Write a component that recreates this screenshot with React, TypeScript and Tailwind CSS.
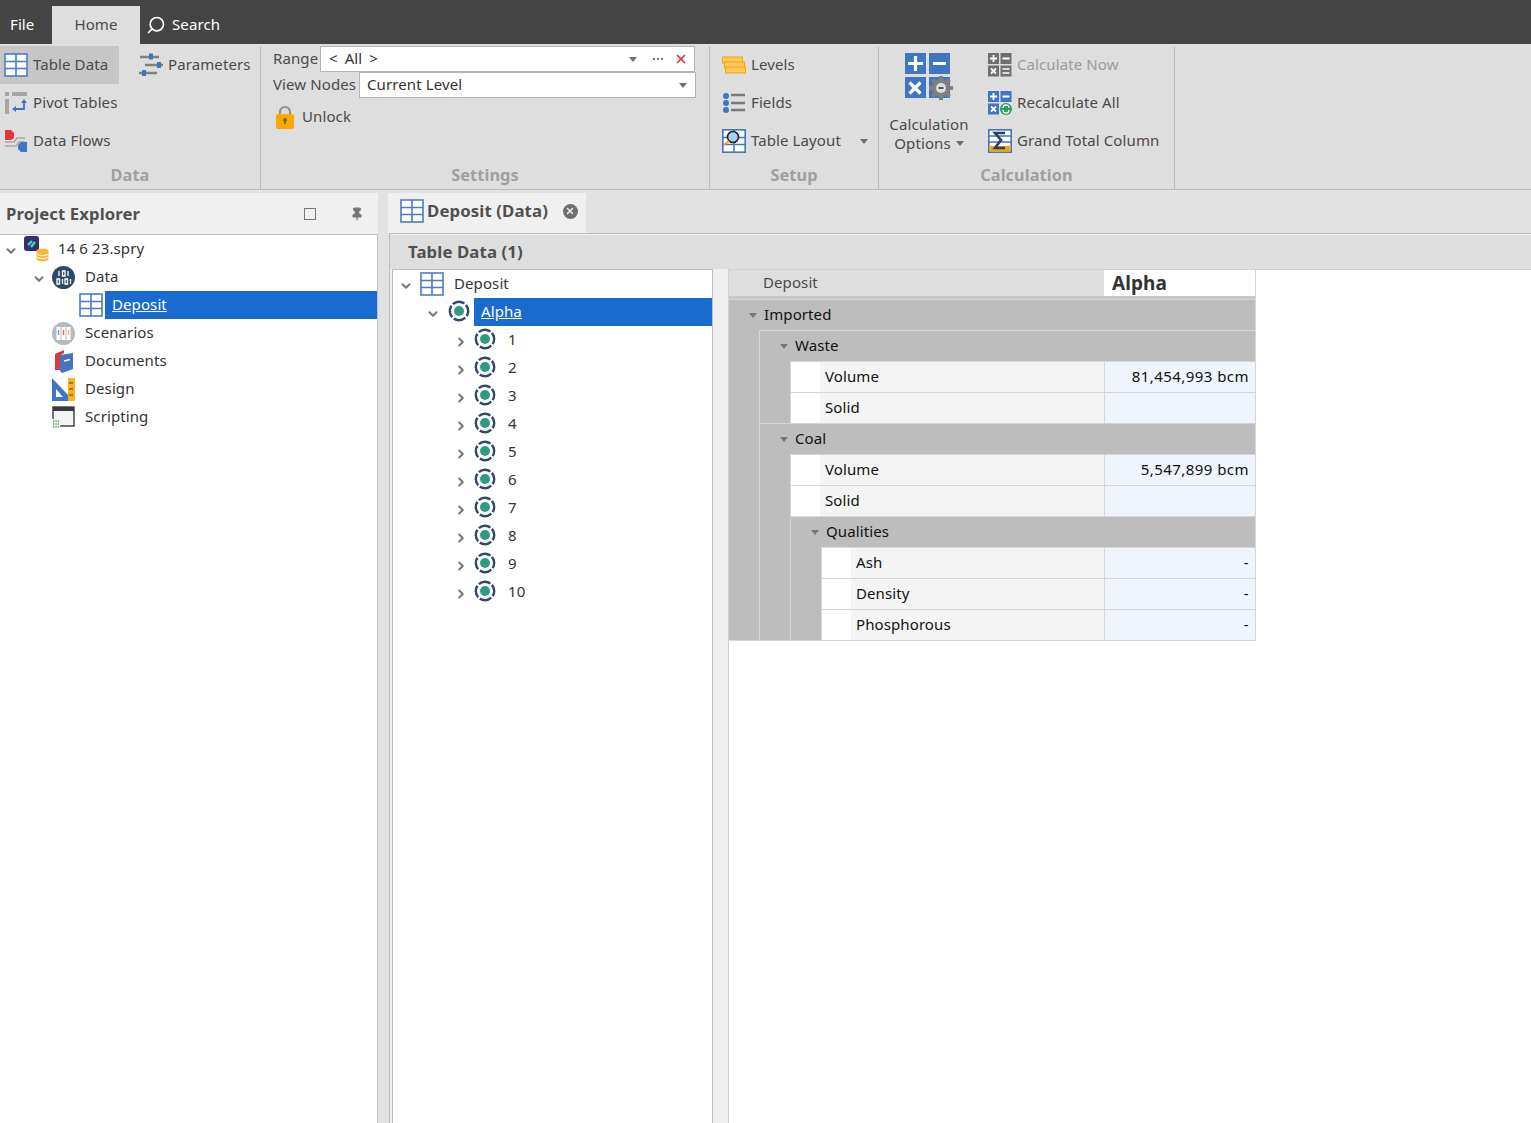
import type { ReactNode } from "react";
import { Search, ChevronDown, ChevronRight, Pin, X, MoreHorizontal } from "lucide-react";

const FONT = "[font-family:'Noto_Sans','Liberation_Sans',sans-serif]";

function GridIcon({ size = 24 }: { size?: number }) {
    return (
        <svg width={size} height={size} viewBox="0 0 24 24" className="shrink-0">
            <rect x="1" y="1" width="22" height="22" fill="#fff" stroke="#4a7cc4" strokeWidth="1.6" />
            <path d="M1 8.5H23M1 15.5H23M12 1V23" stroke="#4a7cc4" strokeWidth="1.6" fill="none" />
        </svg>
    );
}

function PivotIcon() {
    return (
        <svg width="24" height="24" viewBox="0 0 24 24" className="shrink-0">
            <rect x="1" y="1" width="4" height="4" fill="#a5a5a5" />
            <rect x="1" y="8" width="4" height="15" fill="#a5a5a5" />
            <rect x="8" y="1" width="15" height="4" fill="#a5a5a5" />
            <path d="M20 10V18H11" stroke="#3f75c2" strokeWidth="1.8" fill="none" />
            <path d="M17 12L20 8L23 12ZM12 15L8 18L12 21Z" fill="#3f75c2" />
        </svg>
    );
}

function FlowIcon() {
    return (
        <svg width="24" height="24" viewBox="0 0 24 24" className="shrink-0">
            <path d="M1 1H7L10 4V9L7 11H1Z" fill="#e5333f" />
            <path d="M1 13H10L13 9H21M1 17H12L15 13H21" stroke="#a8a8a8" strokeWidth="1.6" fill="none" />
            <path d="M23 13H17L14 16V20L17 23H23Z" fill="#3f75c2" />
        </svg>
    );
}

function ParamsIcon() {
    return (
        <svg width="24" height="24" viewBox="0 0 24 24" className="shrink-0">
            <path d="M1 4H20M6 12H24M0 20H18" stroke="#808080" strokeWidth="2.4" />
            <rect x="10" y="0.5" width="4" height="6" fill="#3f75c2" />
            <rect x="18" y="9" width="4" height="6" fill="#3f75c2" />
            <rect x="3" y="17" width="4" height="6" fill="#3f75c2" />
        </svg>
    );
}

function LockIcon() {
    return (
        <svg width="18" height="24" viewBox="0 0 18 24" className="shrink-0">
            <path d="M4 11V7A5 5 0 0 1 14 7V11" stroke="#8f8f8f" strokeWidth="2.2" fill="none" />
            <rect x="0" y="9" width="18" height="15" rx="2" fill="#fda800" />
            <circle cx="9" cy="15" r="2" fill="#7a6a40" />
            <rect x="8" y="15" width="2" height="4" fill="#7a6a40" />
        </svg>
    );
}

function LevelsIcon() {
    return (
        <svg width="24" height="24" viewBox="0 0 24 24" className="shrink-0">
            <rect x="0.5" y="4" width="20" height="6" fill="#fdc95c" stroke="#f5a400" />
            <rect x="2.5" y="9" width="20" height="6" fill="#fdc95c" stroke="#f5a400" />
            <rect x="3.5" y="14" width="20" height="6" fill="#fdc95c" stroke="#f5a400" />
        </svg>
    );
}

function FieldsIcon() {
    return (
        <svg width="24" height="24" viewBox="0 0 24 24" className="shrink-0">
            <circle cx="4" cy="5" r="3" fill="#3f75c2" />
            <circle cx="4" cy="12" r="3" fill="#3f75c2" />
            <circle cx="4" cy="19" r="3" fill="#3f75c2" />
            <path d="M9 4H23M9 12H23M9 19H23" stroke="#7a7a7a" strokeWidth="2.4" />
        </svg>
    );
}

function TableLayoutIcon() {
    return (
        <svg width="24" height="24" viewBox="0 0 24 24" className="shrink-0">
            <rect x="0.8" y="0.8" width="22.4" height="22.4" fill="#fff" stroke="#3f75c2" strokeWidth="1.6" />
            <path d="M1 8.5H23M1 15.5H23M12 1V23" stroke="#3f75c2" strokeWidth="1.4" />
            <circle cx="11" cy="8" r="5.5" fill="#a8d0f5" stroke="#222" strokeWidth="1.6" />
            <path d="M7 12L2 16" stroke="#f5a400" strokeWidth="2" />
        </svg>
    );
}

function MathIcon({ fill, last }: { fill: string; last: ReactNode }) {
    return (
        <svg width="24" height="24" viewBox="0 0 24 24" className="shrink-0">
            <rect x="0" y="0" width="11" height="11" fill={fill} />
            <rect x="12.5" y="0" width="11" height="11" fill={fill} />
            <rect x="0" y="12.5" width="11" height="11" fill={fill} />
            <path d="M2 5.5H9M5.5 2V9M14.5 5.5H21.5M3 15.5L8 20.5M8 15.5L3 20.5" stroke="#fff" strokeWidth="1.8" />
            {last}
        </svg>
    );
}

function CalcBigIcon() {
    return (
        <svg width="48" height="48" viewBox="0 0 48 48" className="shrink-0">
            <rect x="0" y="0" width="21" height="21" fill="#3f75c2" />
            <rect x="24" y="0" width="21" height="21" fill="#3f75c2" />
            <rect x="0" y="24" width="21" height="21" fill="#3f75c2" />
            <rect x="24" y="24" width="21" height="21" fill="#3f75c2" />
            <path d="M3 10.5H18M10.5 3V18M28 10.5H41M4.5 29.5L15.5 40.5M15.5 29.5L4.5 40.5" stroke="#fff" strokeWidth="3.2" />
            <circle cx="36" cy="35" r="9" fill="#808080" />
            <path d="M36 23V47M24 35H48M27.5 26.5L44.5 43.5M44.5 26.5L27.5 43.5" stroke="#808080" strokeWidth="4" />
            <circle cx="36" cy="35" r="5" fill="#dedede" />
            <rect x="33.5" y="34" width="5" height="2" fill="#555" />
        </svg>
    );
}

function SigmaIcon() {
    return (
        <svg width="24" height="24" viewBox="0 0 24 24" className="shrink-0">
            <rect x="0.8" y="0.8" width="22.4" height="22.4" fill="#fff" stroke="#3f75c2" strokeWidth="1.6" />
            <path d="M1 7H23M1 13H23" stroke="#3f75c2" strokeWidth="1.4" />
            <rect x="1.5" y="17" width="21" height="5.5" fill="#f5a400" />
            <path d="M17 4H7L13 11L7 19H17" stroke="#29415c" strokeWidth="2.6" fill="none" />
        </svg>
    );
}

function ProjectIcon() {
    return (
        <svg width="26" height="26" viewBox="0 0 26 26" className="shrink-0">
            <rect x="0" y="0" width="15" height="15" rx="3" fill="#3a2d6b" />
            <path d="M4 9L8 5M7 11L11 6" stroke="#35e0c0" strokeWidth="2.4" />
            <ellipse cx="18.5" cy="15" rx="6" ry="2.5" fill="#fbb53a" />
            <rect x="12.5" y="15" width="12" height="8" fill="#fbb53a" />
            <ellipse cx="18.5" cy="23" rx="6" ry="2.5" fill="#fbb53a" />
            <path d="M12.5 18.5Q18.5 21 24.5 18.5M12.5 21.5Q18.5 24 24.5 21.5" stroke="#fff" fill="none" />
        </svg>
    );
}

function DataIcon() {
    return (
        <svg width="23" height="23" viewBox="0 0 23 23" className="shrink-0">
            <circle cx="11.5" cy="11.5" r="11.5" fill="#2f4a64" />
            <path d="M7 5V10M10.5 5H13V10H10.5ZM16 5V10M5 13H7.5V18H5ZM10.5 13V18M13 13H15.5V18H13ZM18.5 13V18" stroke="#fff" strokeWidth="1.3" fill="none" />
        </svg>
    );
}

function ScenarioIcon() {
    return (
        <svg width="23" height="23" viewBox="0 0 23 23" className="shrink-0">
            <circle cx="11.5" cy="11.5" r="11.5" fill="#b4bac0" />
            <rect x="4.5" y="5" width="4" height="13" fill="#fff" />
            <rect x="9.5" y="5" width="4" height="13" fill="#fff" />
            <rect x="14.5" y="5" width="4" height="13" fill="#fff" />
            <path d="M6.5 8V13" stroke="#5aa0d8" strokeWidth="1.4" />
            <path d="M11.5 8V13" stroke="#e5605a" strokeWidth="1.4" />
            <path d="M16.5 8V13" stroke="#e8b040" strokeWidth="1.4" />
        </svg>
    );
}

function DocsIcon() {
    return (
        <svg width="23" height="23" viewBox="0 0 23 23" className="shrink-0">
            <path d="M3 4L12 0V3L9 5V20L3 20Z" fill="#d63a42" />
            <path d="M8 5L21 3V19L10 23L8 21Z" fill="#3f75c2" />
            <path d="M12 11L18 9.5" stroke="#fff" strokeWidth="1.8" />
        </svg>
    );
}

function DesignIcon() {
    return (
        <svg width="23" height="23" viewBox="0 0 23 23" className="shrink-0">
            <path d="M0 0L16 17V23H0ZM4 11V19H11Z" fill="#3f75c2" fillRule="evenodd" />
            <rect x="16" y="0" width="7" height="23" fill="#fbb020" />
            <path d="M17 5H21M17 11H21M17 17H21" stroke="#444" strokeWidth="1.2" />
        </svg>
    );
}

function ScriptIcon() {
    return (
        <svg width="23" height="23" viewBox="0 0 23 23" className="shrink-0">
            <rect x="1" y="1" width="21" height="19" fill="#f4f4f4" stroke="#3a3a3a" strokeWidth="1.4" />
            <rect x="1" y="1" width="21" height="4" fill="#3a3a3a" />
            <rect x="0" y="13" width="8" height="10" fill="#fff" />
            <path d="M1 15H7M1 18H7M1 21H7" stroke="#3ca04a" strokeWidth="1.4" strokeDasharray="1.4 1" />
        </svg>
    );
}

function NodeIcon() {
    return (
        <svg width="22" height="22" viewBox="0 0 22 22" className="shrink-0 -mt-[3px]">
            <circle cx="11" cy="11" r="9.2" fill="#fff" stroke="#2f4a64" strokeWidth="2.4" strokeDasharray="12.45 2" strokeDashoffset="7" />
            <circle cx="11" cy="11" r="5" fill="#2f9a82" />
        </svg>
    );
}

function Caret({ className = "" }: { className?: string }) {
    return <span className={`inline-block w-0 h-0 border-x-[4.5px] border-x-transparent border-t-[5px] border-t-[#6f6f6f] ${className}`} />;
}

function RibbonBtn({ icon, label, active, disabled }: { icon: ReactNode; label: string; active?: boolean; disabled?: boolean }) {
    return (
        <div className={`h-[38px] flex items-center gap-[5px] pl-[4px] ${active ? "bg-[#c6c6c6]" : ""} ${disabled ? "text-[#9a9a9a]" : "text-[#4a4a4a]"}`}>
            {icon}
            <span className="whitespace-nowrap -mt-[2px]">{label}</span>
        </div>
    );
}

function RibbonGroup({ title, width, children }: { title: string; width: string; children: ReactNode }) {
    return (
        <div className={`${width} shrink-0 flex flex-col border-r border-[#bdbdbd]`}>
            <div className="flex-1 min-h-0">{children}</div>
            <div className="h-[28px] leading-[28px] text-center font-bold text-[16.3px] text-[#9f9f9f]">{title}</div>
        </div>
    );
}

function Ribbon() {
    return (
        <div className="h-[146px] shrink-0 flex bg-[#dedede] border-b border-[#bdbdbd] pt-[2px]">
            <RibbonGroup title="Data" width="w-[261px]">
                <div className="flex">
                    <div className="w-[119px]">
                        <RibbonBtn active icon={<GridIcon />} label="Table Data" />
                        <RibbonBtn icon={<PivotIcon />} label="Pivot Tables" />
                        <RibbonBtn icon={<FlowIcon />} label="Data Flows" />
                    </div>
                    <div className="ml-[16px]">
                        <RibbonBtn icon={<ParamsIcon />} label="Parameters" />
                    </div>
                </div>
            </RibbonGroup>
            <RibbonGroup title="Settings" width="w-[449px]">
                <div className="pl-[12px] text-[#4a4a4a]">
                    <div className="flex items-center h-[26px]">
                        <span className="w-[47px] -mt-[2px]">Range</span>
                        <div className="w-[375px] h-[26px] bg-white border border-[#b4b4b4] flex items-center pl-[8px] pr-[6px] text-[#333]">
                            <span className="flex-1 [word-spacing:3px] -mt-[2px]">&lt; All &gt;</span>
                            <Caret className="mr-[14px]" />
                            <MoreHorizontal size={14} className="mr-[9px] text-[#6f6f6f]" />
                            <X size={14} strokeWidth={3} className="text-[#e5333f]" />
                        </div>
                    </div>
                    <div className="flex items-center h-[26px]">
                        <span className="w-[86px] whitespace-nowrap -mt-[2px]">View Nodes</span>
                        <div className="w-[337px] h-[26px] bg-white border border-[#b4b4b4] flex items-center pl-[7px] pr-[8px] text-[#333]">
                            <span className="flex-1 -mt-[2px]">Current Level</span>
                            <Caret />
                        </div>
                    </div>
                    <div className="flex items-center h-[38px] pl-[3px] gap-[8px]">
                        <LockIcon />
                        <span className="-mt-[2px]">Unlock</span>
                    </div>
                </div>
            </RibbonGroup>
            <RibbonGroup title="Setup" width="w-[169px]">
                <div className="pl-[8px] pr-[10px]">
                    <RibbonBtn icon={<LevelsIcon />} label="Levels" />
                    <RibbonBtn icon={<FieldsIcon />} label="Fields" />
                    <div className="flex items-center justify-between">
                        <RibbonBtn icon={<TableLayoutIcon />} label="Table Layout" />
                        <Caret />
                    </div>
                </div>
            </RibbonGroup>
            <RibbonGroup title="Calculation" width="w-[296px]">
                <div className="flex">
                    <div className="w-[100px] flex flex-col items-center pt-[7px] text-[#4a4a4a] leading-[19px]">
                        <CalcBigIcon />
                        <span className="mt-[14px]">Calculation</span>
                        <span className="flex items-center gap-[5px]">Options <Caret /></span>
                    </div>
                    <div className="ml-[5px]">
                        <RibbonBtn disabled icon={<MathIcon fill="#6f6f6f" last={<g><rect x="12.5" y="12.5" width="11" height="11" fill="#6f6f6f" /><path d="M14.5 16H21.5M14.5 20H21.5" stroke="#fff" strokeWidth="1.6" /></g>} />} label="Calculate Now" />
                        <RibbonBtn icon={<MathIcon fill="#3f75c2" last={<g><circle cx="18" cy="18" r="6" fill="#2f9a5a" /><path d="M15 17A3 3 0 0 1 21 17M21 19A3 3 0 0 1 15 19" stroke="#fff" strokeWidth="1.3" fill="none" /></g>} />} label="Recalculate All" />
                        <RibbonBtn icon={<SigmaIcon />} label="Grand Total Column" />
                    </div>
                </div>
            </RibbonGroup>
        </div>
    );
}

function TreeRow({ chevronX, chevron, icon, label, textX, selected, selFrom, iconX = 6 }: {
    chevronX: number; chevron?: "down" | "right"; icon: ReactNode; label: string; textX: number; selected?: boolean; selFrom?: number; iconX?: number;
}) {
    return (
        <div className="h-[28px] flex items-center text-[#333]" style={{ paddingLeft: chevronX }}>
            <span className="w-[14px] shrink-0 flex justify-center text-[#777] mt-[3px]">
                {chevron === "down" && <ChevronDown size={16} strokeWidth={3.5} />}
                {chevron === "right" && <ChevronRight size={16} strokeWidth={3.5} />}
            </span>
            <span className="shrink-0 flex" style={{ marginLeft: iconX }}>{icon}</span>
            {selected ? (
                <span className="flex-1 self-stretch flex items-center bg-[#1a6bd0] text-white underline pb-[2px]" style={{ marginLeft: selFrom, paddingLeft: 7 }}>{label}</span>
            ) : (
                <span className="-mt-[2px]" style={{ marginLeft: textX }}>{label}</span>
            )}
        </div>
    );
}

function ProjectExplorer() {
    return (
        <div className="w-[378px] shrink-0 flex flex-col pt-[3px]">
            <div className="h-[41px] shrink-0 bg-[#f0f0f0] flex items-center pl-[6px] font-bold text-[16.7px] text-[#505050]">
                <span className="flex-1">Project Explorer</span>
                <span className="w-[12px] h-[12px] border-[1.5px] border-[#777] mr-[34px]" />
                <Pin size={14} fill="#777" className="text-[#777] mr-[14px]" />
            </div>
            <div className="flex-1 bg-white border-t border-r border-[#bdbdbd]">
                <TreeRow chevronX={4} chevron="down" icon={<ProjectIcon />} label="14 6 23.spry" textX={8} />
                <TreeRow chevronX={32} chevron="down" icon={<DataIcon />} label="Data" textX={10} />
                <TreeRow chevronX={59} icon={<GridIcon />} label="Deposit" textX={0} selected selFrom={2} />
                <TreeRow chevronX={32} icon={<ScenarioIcon />} label="Scenarios" textX={10} />
                <TreeRow chevronX={32} icon={<DocsIcon />} label="Documents" textX={10} />
                <TreeRow chevronX={32} icon={<DesignIcon />} label="Design" textX={10} />
                <TreeRow chevronX={32} icon={<ScriptIcon />} label="Scripting" textX={10} />
            </div>
        </div>
    );
}

function DepositTree() {
    return (
        <div className="w-[321px] shrink-0 bg-white border-t border-x border-[#bdbdbd] ml-[2px]">
            <TreeRow chevronX={6} chevron="down" iconX={7} icon={<GridIcon />} label="Deposit" textX={10} />
            <TreeRow chevronX={33} chevron="down" iconX={8} icon={<NodeIcon />} label="Alpha" textX={0} selected selFrom={4} />
            {["1", "2", "3", "4", "5", "6", "7", "8", "9", "10"].map(n => (
                <TreeRow key={n} chevronX={61} chevron="right" icon={<NodeIcon />} label={n} textX={12} />
            ))}
        </div>
    );
}

function GroupRow({ label, children }: { label: string; children: ReactNode }) {
    return (
        <div className="border-t border-[#d6d6d6] bg-[#bdbdbd]">
            <div className="h-[30px] flex items-center text-[#111]">
                <Caret className="ml-[20px] mr-[7px] border-t-[#777]" />
                <span className="-mt-[2px]">{label}</span>
            </div>
            <div className="ml-[30px] border-l border-[#d6d6d6]">{children}</div>
        </div>
    );
}

function ValueRow({ label, value }: { label: string; value?: string }) {
    return (
        <div className="h-[31px] flex border-t border-[#d6d6d6] text-[#111]">
            <div className="w-[29px] shrink-0 bg-white" />
            <div className="flex-1 bg-[#f4f4f4] flex items-center pl-[5px] pb-[2px]">{label}</div>
            <div className="w-[151px] shrink-0 bg-[#f0f4fd] border-l border-[#d6d6d6] flex items-center justify-end pr-[6px] pb-[2px] tracking-[0.45px]">{value}</div>
        </div>
    );
}

function ValueGrid() {
    return (
        <div className="w-[527px] shrink-0 border-b border-r border-[#d6d6d6] self-start">
            <div className="h-[26px] flex bg-[#dedede]">
                <div className="flex-1 flex items-center pl-[34px] pb-[2px] text-[#4a4a4a]">Deposit</div>
                <div className="w-[151px] bg-white flex items-center pl-[8px] font-bold text-[19px] text-[#333]">Alpha</div>
            </div>
            <div className="h-[3px] bg-[#c8c8c8]" />
            <GroupRow label="Imported">
                <GroupRow label="Waste">
                    <ValueRow label="Volume" value="81,454,993 bcm" />
                    <ValueRow label="Solid" />
                </GroupRow>
                <GroupRow label="Coal">
                    <ValueRow label="Volume" value="5,547,899 bcm" />
                    <ValueRow label="Solid" />
                    <GroupRow label="Qualities">
                        <ValueRow label="Ash" value="-" />
                        <ValueRow label="Density" value="-" />
                        <ValueRow label="Phosphorous" value="-" />
                    </GroupRow>
                </GroupRow>
            </GroupRow>
        </div>
    );
}

export default function App() {
    return (
        <div className={`${FONT} w-[1531px] h-[1123px] overflow-hidden flex flex-col text-[15px] tracking-[0.1px] bg-[#e2e2e2]`}>
            <div className="h-[44px] shrink-0 bg-[#444444] flex items-end text-white">
                <div className="h-[38px] w-[52px] flex items-center pl-[10px] pb-[2px]">File</div>
                <div className="h-[38px] w-[88px] bg-[#dedede] text-[#4a4a4a] flex items-center justify-center pb-[2px]">Home</div>
                <div className="h-[38px] flex items-center pl-[6px] gap-[6px]">
                    <Search size={20} className="-scale-x-100" />
                    <span className="-mt-[2px]">Search</span>
                </div>
            </div>
            <Ribbon />
            <div className="flex-1 min-h-0 flex">
                <ProjectExplorer />
                <div className="flex-1 min-w-0 flex flex-col ml-[10px] pt-[3px]">
                    <div className="h-[40px] shrink-0 flex">
                        <div className="w-[198px] bg-[#f0f0f0] flex items-center pl-[12px] pb-[4px] gap-[3px] font-bold text-[16.8px] text-[#505050]">
                            <GridIcon />
                            <span className="whitespace-nowrap">Deposit (Data)</span>
                            <span className="ml-[12px] w-[15px] h-[15px] rounded-full bg-[#6f6f6f] flex items-center justify-center">
                                <X size={10} strokeWidth={3.5} className="text-[#f0f0f0]" />
                            </span>
                        </div>
                    </div>
                    <div className="flex-1 min-h-0 flex flex-col border-t border-l border-[#bdbdbd] ml-[1px] bg-[#f0f0f0]">
                        <div className="h-[35px] shrink-0 bg-[#dedede] flex items-center pl-[18px] font-bold text-[16.8px] text-[#505050] border-t border-[#f0f0f0]">Table Data (1)</div>
                        <div className="flex-1 min-h-0 flex">
                            <DepositTree />
                            <div className="w-[15px] shrink-0" />
                            <div className="flex-1 bg-white border-l border-t border-[#d0d0d0] flex">
                                <ValueGrid />
                            </div>
                        </div>
                    </div>
                </div>
            </div>
        </div>
    );
}
